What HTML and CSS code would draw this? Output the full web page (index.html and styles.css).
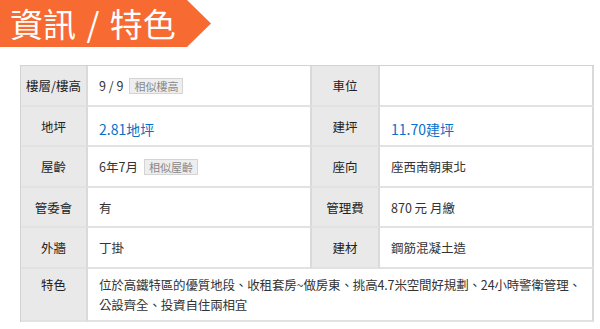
FILE: index.html
```html
<!DOCTYPE html>
<html lang="zh-Hant">
<head>
<meta charset="utf-8">
<link rel="stylesheet" href="styles.css">
</head>
<body>
<div class="banner"><h1 class="banner-title">資訊 / 特色</h1></div>
<div class="spec">
  <div class="lab r1">樓層/樓高</div>
  <div class="val r1">9 / 9<span class="tag">相似樓高</span></div>
  <div class="lab r1">車位</div>
  <div class="val r1"></div>

  <div class="lab r2">地坪</div>
  <div class="val r2"><span class="big">2.81地坪</span></div>
  <div class="lab r2">建坪</div>
  <div class="val r2"><span class="big">11.70建坪</span></div>

  <div class="lab r3">屋齡</div>
  <div class="val r3">6年7月<span class="tag">相似屋齡</span></div>
  <div class="lab r3">座向</div>
  <div class="val r3">座西南朝東北</div>

  <div class="lab r4">管委會</div>
  <div class="val r4">有</div>
  <div class="lab r4">管理費</div>
  <div class="val r4">870 元 月繳</div>

  <div class="lab r5">外牆</div>
  <div class="val r5">丁掛</div>
  <div class="lab r5">建材</div>
  <div class="val r5">鋼筋混凝土造</div>

  <div class="lab r6 top">特色</div>
  <div class="val r6 wide">位於高鐵特區的優質地段、收租套房~做房東、挑高4.7米空間好規劃、24小時警衛管理、公設齊全、投資自住兩相宜</div>
</div>
</body>
</html>
```
FILE: styles.css
```css
html, body {
  margin: 0;
  padding: 0;
  background: #fff;
  font-family: "Noto Sans CJK TC", "Noto Sans", sans-serif;
}
.banner {
  width: 211px;
  height: 47px;
  background: #f76a31;
  clip-path: polygon(0 0, 187px 0, 211px 23.5px, 187px 47px, 0 47px);
  display: flex;
  align-items: center;
}
.banner-title {
  margin: 0 0 0 10px;
  color: #fff;
  font-size: 33px;
  font-weight: 400;
  line-height: 45px;
  word-spacing: 3px;
  white-space: pre;
}
.spec {
  margin: 18px 0 0 20px;
  width: 573px;
  border-left: 1px solid #d2d2d2;
  border-top: 1px solid #d2d2d2;
  display: grid;
  grid-template-columns: 67px 224px 68px 214px;
  grid-template-rows: 41px 40px 41px 40px 41px 53px;
  font-size: 12.5px;
  color: #333;
}
.lab, .val {
  box-sizing: border-box;
  border-right: 2px solid #dadada;
  border-bottom: 2px solid #e2e2e2;
  display: flex;
  align-items: center;
}
.lab {
  background: #e9e9e9;
  justify-content: center;
  color: #222;
}
.val {
  padding-left: 11px;
  background: #fff;
}
.top {
  align-items: flex-start;
  padding-top: 6px;
  line-height: 20px;
}
.wide {
  grid-column: 2 / 5;
  align-items: flex-start;
  padding-top: 6px;
  padding-right: 2px;
  line-height: 20px;
  letter-spacing: -0.15px;
}
.tag {
  margin-left: 6px;
  height: 16px;
  box-sizing: border-box;
  padding: 0 4px;
  background: #eeeeee;
  border: 1px solid #d4d4d4;
  color: #888;
  font-size: 11px;
  line-height: 14px;
}
.big {
  color: #0b6fc7;
  font-size: 14px;
  margin-top: 6px;
}
```
